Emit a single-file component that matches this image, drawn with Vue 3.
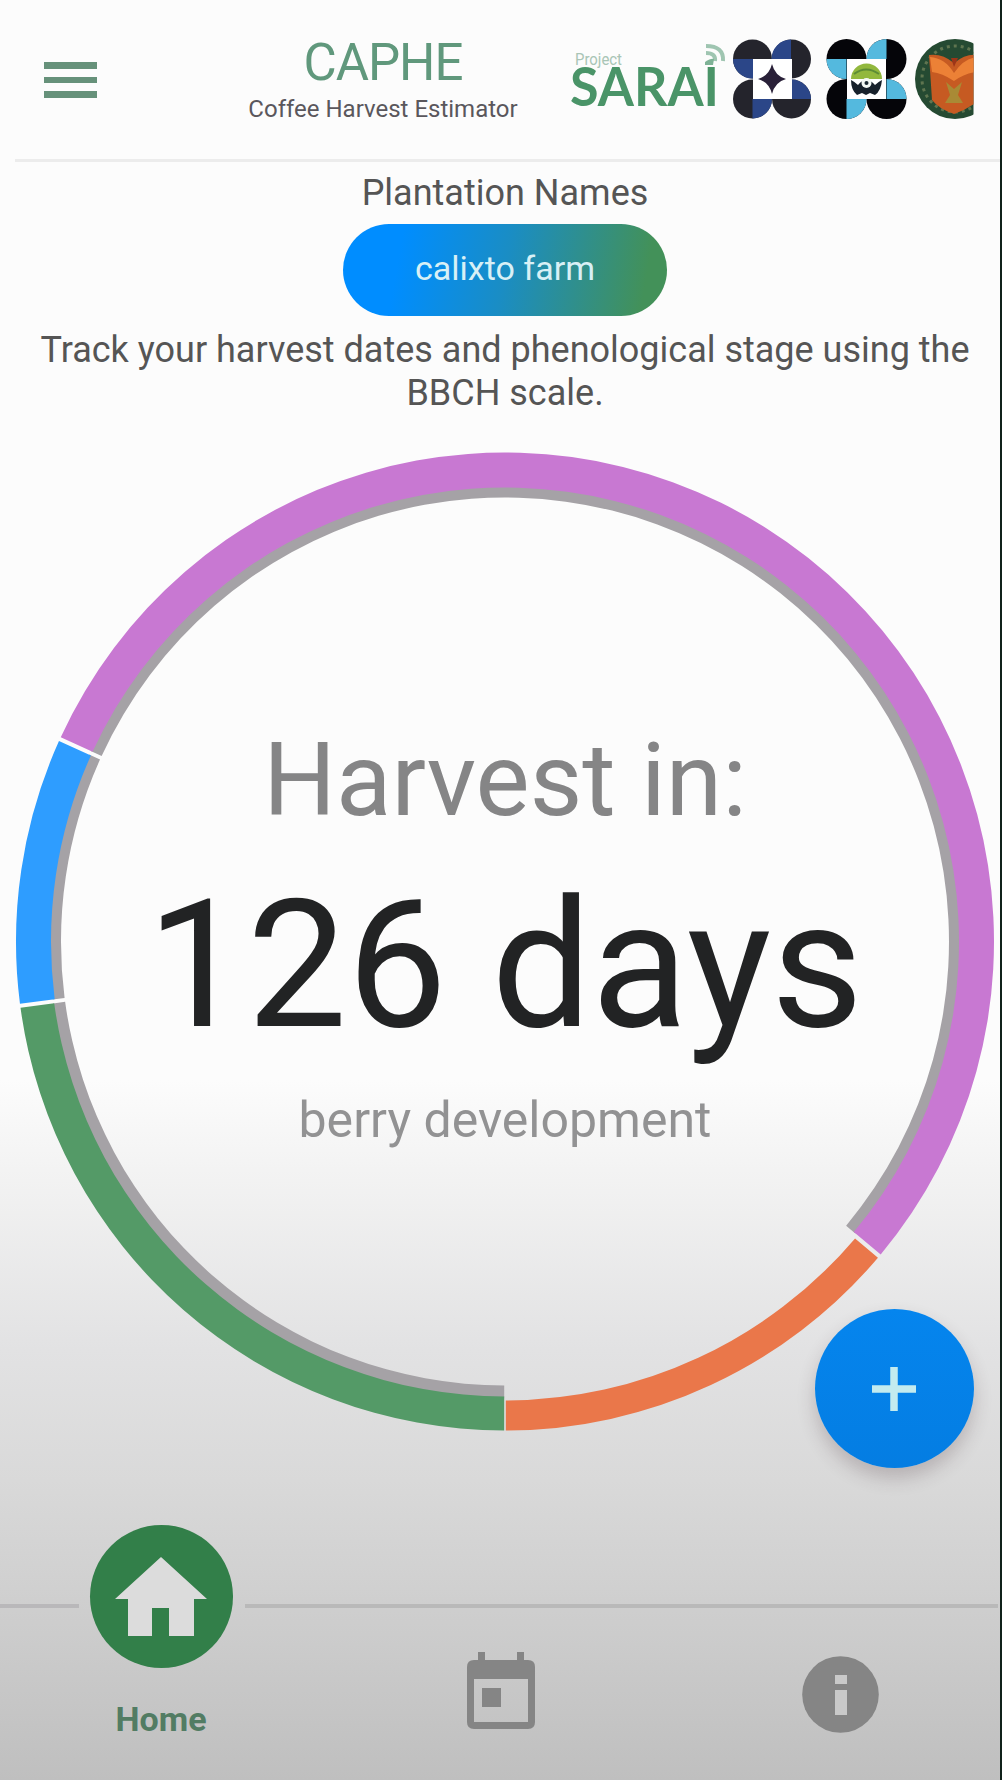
<script setup>
import { computed } from 'vue'

const C = { x: 505, y: 941.5 }
const pt = (r, deg) => {
  const a = (deg * Math.PI) / 180
  return `${(C.x + r * Math.cos(a)).toFixed(2)} ${(C.y + r * Math.sin(a)).toFixed(2)}`
}
const band = (r1, r2, from, to) => {
  const large = to - from > 180 ? 1 : 0
  return `M${pt(r2, from)}A${r2} ${r2} 0 ${large} 1 ${pt(r2, to)}L${pt(r1, to)}A${r1} ${r1} 0 ${large} 0 ${pt(r1, from)}Z`
}
const stages = [
  { name: 'harvest', color: '#ea774a', from: 40.3, to: 89.9, inner: 459 },
  { name: 'dormancy', color: '#549a67', from: 90.1, to: 172.2, inner: 455 },
  { name: 'flowering', color: '#2e9dff', from: 172.7, to: 204.2, inner: 454 },
  { name: 'berry', color: '#c878d2', from: 204.7, to: 399.8, inner: 454 }
]
const arcs = computed(() => stages.map(s => ({ ...s, d: band(s.inner, 489, s.from, s.to) })))
const elapsed = computed(() => stages.slice(1).map(s => band(444, 456, s.from, s.to)))
</script>

<template>
  <main class="screen">
    <header class="bar">
      <button class="menu" aria-label="Menu"><i></i><i></i><i></i></button>
      <div class="brand">
        <h1>CAPHE</h1>
        <p>Coffee Harvest Estimator</p>
      </div>
      <div class="logos">
        <svg width="415" height="110" viewBox="0 0 415 110">
          <text class="project" x="15" y="25" textLength="47" lengthAdjust="spacingAndGlyphs">Project</text>
          <text class="sarai" x="10" y="66" textLength="149" lengthAdjust="spacingAndGlyphs">SARAI</text>
          <g fill="none" stroke="#9fc5b1" stroke-width="4">
            <path d="M146 6q18 0 17 15M146 13q10 0 9 8" />
          </g>
          <path d="M145 22q6-4 9-3l-1 6h-8z" fill="#7eb296" />

          <g>
            <circle cx="192.500" cy="19" r="19.500" fill="#24242c" /><circle cx="231.500" cy="19" r="19.500" fill="#24242c" />
            <circle cx="192.500" cy="59" r="19.500" fill="#24242c" /><circle cx="231.500" cy="59" r="19.500" fill="#24242c" />
            <path d="M173 19h20v19.500a19.500 19.500 0 0 1-20-19.500zM231 -.5v20h-19.500a19.500 19.500 0 0 1 19.500-20zM192.500 59h19.500a19.500 19.500 0 0 1-19.500 19.500zM231.500 39.500a19.500 19.500 0 0 1 19.500 19.500h-19.500z" fill="#2b4688" />
            <rect x="193" y="19" width="39" height="40" fill="#fff" />
            <path d="M212 24q3 12 14 15-11 3-14 15-3-12-14-15 11-3 14-15z" fill="#292038" />
          </g>
          <g>
            <circle cx="286.500" cy="19" r="20" fill="#050509" /><circle cx="326.500" cy="19" r="20" fill="#050509" />
            <circle cx="286.500" cy="59" r="20" fill="#050509" /><circle cx="326.500" cy="59" r="20" fill="#050509" />
            <path d="M266.500 19h20v20a20 20 0 0 1-20-20zM326.500-1v20h-20a20 20 0 0 1 20-20zM286.500 59h20a20 20 0 0 1-20 20zM326.500 39a20 20 0 0 1 20 20h-20z" fill="#54b9de" />
            <rect x="287" y="19" width="39" height="40" fill="#fff" />
            <path d="M291 39a15.500 15.500 0 0 1 31 0z" fill="#92b83e" />
            <path d="M294 34q12-9 25 0" fill="none" stroke="#5d8c36" stroke-width="2" />
            <path d="M291 40q4 2 7 5 8-10 17 0 3-3 7-5-1 11-7 15l-5-2-4 2-4-2-5 2q-6-5-6-15z" fill="#17212b" />
            <circle cx="306.500" cy="43" r="5" fill="#f3f8f5" /><circle cx="306.500" cy="43" r="2" fill="#1c2a33" />
          </g>
          <g clip-path="url(#sealClip)">
            <circle cx="395" cy="39" r="40" fill="#254a32" />
            <circle cx="395" cy="39" r="33" fill="none" stroke="#5f7550" stroke-width="3" stroke-dasharray="3 4" />
            <path d="M369 15q13-2 25 8 12-10 24-8v46q-10 8-24 13-15-5-22-14z" fill="#c65a22" />
            <path d="M370 17q15 1 24 16 9-14 22-16v15q-12 2-22 9-12-8-22-9z" fill="#ec8136" />
            <path d="M386 42l8 7 8-7-4 13 5 8h-18l5-8z" fill="#a98a35" />
            <path d="M391 18h7l-4 9z" fill="#9d3518" />
          </g>
          <defs><clipPath id="sealClip"><rect x="350" y="-2" width="63.500" height="84" /></clipPath></defs>
        </svg>
      </div>
    </header>

    <section class="intro">
      <h2>Plantation Names</h2>
      <button class="farm">calixto farm</button>
      <p class="track"><span class="l1">Track your harvest dates and phenological stage using the</span><br /><span class="l2">BBCH scale.</span></p>
    </section>

    <section class="chart">
      <svg class="ring" viewBox="0 435 1002 1010" width="1002" height="1010">
        <path v-for="(d, i) in elapsed" :key="i" :d="d" fill="#a5a2a6" />
        <path v-for="a in arcs" :key="a.name" :d="a.d" :fill="a.color" />
      </svg>
      <div class="count">
        <p class="label">Harvest in:</p>
        <p class="days">126 days</p>
        <p class="stage">berry development</p>
      </div>
      <button class="fab" aria-label="Add">
        <svg width="44" height="44" viewBox="0 0 44 44"><path d="M22 0v44M0 22h44" stroke="#c3ebef" stroke-width="7.500" /></svg>
      </button>
    </section>

    <nav class="tabs">
      <a class="tab home">
        <span class="disc">
          <svg width="92" height="80" viewBox="0 0 92 80"><path d="M46 0 92 42H79v37H54V51H37v28H13V42H0z" fill="#dcdcdc" /></svg>
        </span>
        <b>Home</b>
      </a>
      <a class="tab cal">
        <svg width="68" height="77" viewBox="0 0 68 77">
          <path fill-rule="evenodd" d="M11 0h7v8h32V0h7v8h4q7 0 7 7v55q0 7-7 7H7q-7 0-7-7V15q0-7 7-7h4zM7 27v43h54V27zM15 36h19v19H15z" fill="#858585" />
        </svg>
      </a>
      <a class="tab info">
        <svg width="77" height="77" viewBox="0 0 77 77">
          <circle cx="38.500" cy="38.500" r="38.300" fill="#858585" />
          <path d="M33 19h12v9H33zM33 34h12v25H33z" fill="#c9c9c9" />
        </svg>
      </a>
    </nav>
    <i class="edge"></i>
  </main>
</template>

<style>
body { margin: 0; }
</style>

<style scoped>
.screen {
  position: relative;
  display: flex;
  flex-direction: column;
  width: 1002px;
  height: 1780px;
  overflow: hidden;
  font-family: Roboto, "Liberation Sans", sans-serif;
  background: linear-gradient(#fcfcfc 0, #fcfcfc 1080px, #f3f3f3 1170px, #e2e2e3 1350px, #d9d9d9 1480px, #cfcfcf 1600px, #bfbfbf 1780px);
}
h1, h2, p { margin: 0; font-weight: 400; white-space: nowrap; }
button { border: 0; padding: 0; font-family: inherit; }
.bar {
  display: flex;
  align-items: flex-start;
  height: 159px;
  border-bottom: 3px solid #ececec;
  margin-left: 15px;
  flex: none;
}
.menu {
  display: flex;
  flex-direction: column;
  gap: 8px;
  width: 53px;
  margin: 62px 0 0 29px;
  background: none;
}
.menu i { height: 6.500px; background: #66917a; }
.brand { width: 300px; margin: 33px 0 0 136px; text-align: center; }
.brand h1 { font-size: 51px; line-height: 60px; letter-spacing: -1px; color: #60987c; }
.brand p { font-size: 24px; line-height: 32px; color: #5a575c; }
.logos { margin: 40px 0 0 27px; }
.logos svg { overflow: visible; display: block; }
.project { font-size: 17px; fill: #a9c5b6; }
.sarai { font-family: Lato, sans-serif; font-weight: 700; font-size: 53px; fill: #4a9468; }
.intro { display: flex; flex-direction: column; align-items: center; flex: none; height: 273px; padding-left: 8px; }
.intro h2 { font-size: 36px; line-height: 42px; margin-top: 10px; color: #555; }
.farm {
  width: 324px;
  height: 92px;
  margin-top: 10px;
  border-radius: 46px;
  padding-bottom: 5px;
  font-size: 34px;
  color: #d8f0f6;
  background: linear-gradient(100deg, #008dff 18%, #1a8dc4 50%, #439159 92%);
}
.track { margin-top: 13px; font-size: 36px; line-height: 43px; color: #555; text-align: center; }
.chart { position: relative; flex: none; height: 1010px; display: grid; justify-items: center; }
.ring { grid-area: 1 / 1; }
.count { grid-area: 1 / 1; text-align: center; padding: 285px 0 0 8px; }
.label { font-size: 102px; line-height: 120px; color: #858586; }
.days { font-size: 178px; line-height: 210px; margin-top: 20px; color: #222324; }
.stage { font-size: 50px; line-height: 60px; margin-top: 20px; color: #929293; }
.fab {
  position: absolute;
  left: 814.500px;
  top: 874px;
  width: 159px;
  height: 159px;
  border-radius: 50%;
  background: linear-gradient(#0585ee, #047de2);
  box-shadow: 0 10px 18px rgba(70, 50, 60, .24);
  display: grid;
  place-items: center;
}
.tabs { flex: 1; position: relative; display: flex; margin-top: 80px; }
.tabs::before {
  content: "";
  position: absolute;
  left: 0;
  right: 4px;
  top: 79px;
  height: 4px;
  background: linear-gradient(90deg, #b9b8ba 0 79px, transparent 79px 245px, #b9b9b9 245px);
}
.tab { display: flex; flex-direction: column; align-items: center; }
.home { width: 325px; }
.disc { width: 143px; height: 143px; border-radius: 50%; background: #327f49; display: grid; place-items: center; }
.home b { font-size: 34px; line-height: 40px; margin-top: 31px; color: #527c63; font-weight: 700; }
.cal { width: 360px; padding-top: 127px; }
.info { width: 326px; padding-top: 131px; }
.edge { position: absolute; right: 0; top: 0; width: 2px; height: 100%; background: #10211a; }
</style>
